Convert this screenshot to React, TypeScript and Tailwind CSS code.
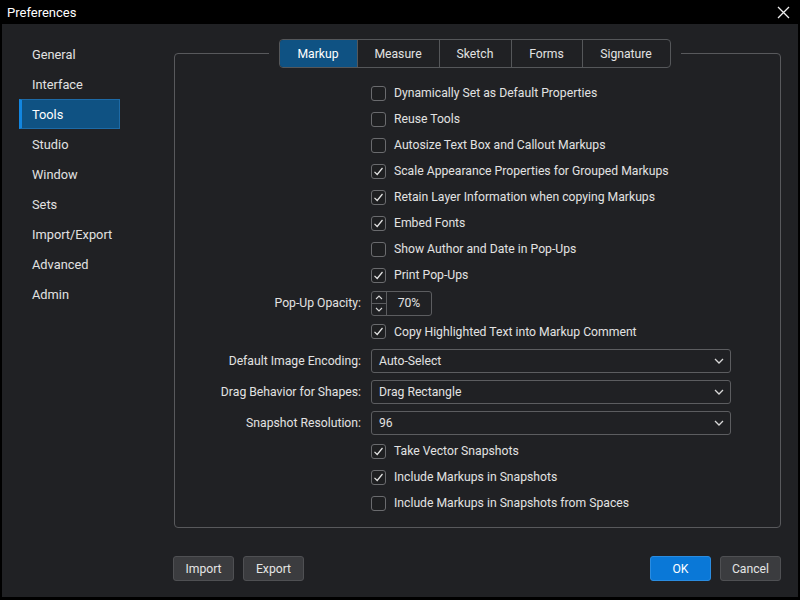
import React from 'react';

const font = { fontFamily: 'Roboto, "Liberation Sans", sans-serif' };

const navItems = ['General', 'Interface', 'Tools', 'Studio', 'Window', 'Sets', 'Import/Export', 'Advanced', 'Admin'];
const tabs = ['Markup', 'Measure', 'Sketch', 'Forms', 'Signature'];

function Check({ checked }: { checked: boolean }) {
  return (
    <div className="w-[15px] h-[15px] rounded-[3px] border border-[#6a6b6e] bg-[#1e1f21] flex items-center justify-center">
      {checked && (
        <svg width="11" height="11" viewBox="0 0 11 11" fill="none">
          <path d="M1.5 5.8 L4.2 8.5 L9.5 2" stroke="#e6e6e6" strokeWidth="1.2" />
        </svg>
      )}
    </div>
  );
}

function CheckRow({ label, checked, cls = 'h-[26px]' }: { label: string; checked: boolean; cls?: string }) {
  return (
    <div className={`flex items-center ${cls}`}>
      <div className="w-[196px]" />
      <Check checked={checked} />
      <span className="ml-[8px] pt-[1px]">{label}</span>
    </div>
  );
}

function Chevron() {
  return (
    <svg width="10" height="6" viewBox="0 0 10 6" fill="none">
      <path d="M1 1 L5 5 L9 1" stroke="#d8d8d8" strokeWidth="1.3" />
    </svg>
  );
}

function SelectRow({ label, value }: { label: string; value: string }) {
  return (
    <div className="flex items-center h-[31px]">
      <div className="w-[186px] text-right pt-[1px]">{label}</div>
      <div className="ml-[10px] w-[360px] h-[24px] rounded-[3px] border border-[#5c5d60] flex items-center justify-between pl-[7px] pr-[6px]">
        <span className="pt-[1px]">{value}</span>
        <Chevron />
      </div>
    </div>
  );
}

function Btn({ label, primary }: { label: string; primary?: boolean }) {
  return (
    <div
      className={`w-[61px] h-[25px] pt-[1px] rounded-[3px] border flex items-center justify-center ${
        primary ? 'bg-[#0a78d7] border-[#2a8ce0] text-white' : 'bg-[#3b3c3f] border-[#4f5053] text-[#e4e4e4]'
      }`}
    >
      {label}
    </div>
  );
}

export default function App() {
  const upper = [
    ['Dynamically Set as Default Properties', false],
    ['Reuse Tools', false],
    ['Autosize Text Box and Callout Markups', false],
    ['Scale Appearance Properties for Grouped Markups', true],
    ['Retain Layer Information when copying Markups', true],
    ['Embed Fonts', true],
    ['Show Author and Date in Pop-Ups', false],
    ['Print Pop-Ups', true],
  ] as const;

  return (
    <div className="w-[800px] h-[600px] bg-black flex flex-col text-[12.2px] text-[#e2e2e2]" style={font}>
      {/* title bar */}
      <div className="h-[24px] flex items-center justify-between pl-[7px] pr-[10px] text-[13px] text-white">
        <span className="pt-[1px]">Preferences</span>
        <svg width="13" height="13" viewBox="0 0 13 13" fill="none">
          <path d="M1 1 L12 12 M12 1 L1 12" stroke="#f0f0f0" strokeWidth="1.3" />
        </svg>
      </div>

      <div className="flex-1 mx-[2px] mb-[3px] bg-[#202124] flex flex-col">
        <div className="flex flex-1">
          {/* sidebar */}
          <div className="w-[172px] pt-[15px] pl-[17px] flex flex-col">
            {navItems.map((n) => (
              <div
                key={n}
                className={`w-[101px] h-[30px] pt-[2px] flex items-center text-[12.8px] ${
                  n === 'Tools'
                    ? 'bg-[#0f5283] border-y border-r border-[#1d6aa6] border-l-[3px] border-l-[#1286e0] pl-[10px] text-white'
                    : 'pl-[13px]'
                }`}
              >
                {n}
              </div>
            ))}
          </div>

          {/* content */}
          <div className="flex-1 pt-[15px] pr-[17px] flex flex-col">
            <div className="flex justify-center relative z-10 -mb-[15px] pr-[6px]">
              <div className="bg-[#202124] px-[10px]">
                <div className="flex h-[29px] rounded-[4px] border border-[#55575a] overflow-hidden">
                  {tabs.map((t, i) => (
                    <div
                      key={t}
                      className={`flex items-center justify-center pt-[2px] ${i > 0 ? 'border-l border-[#55575a]' : ''} ${
                        t === 'Markup' ? 'bg-[#0f5283] text-white' : ''
                      } ${['w-[77px]', 'w-[82px]', 'w-[72px]', 'w-[71px]', 'w-[88px]'][i]}`}
                    >
                      {t}
                    </div>
                  ))}
                </div>
              </div>
            </div>
            <div className="h-[475px] rounded-[4px] border border-[#58595c] pt-[26px]">
              {upper.map(([l, c]) => (
                <CheckRow key={l} label={l} checked={c} />
              ))}
              <div className="flex items-center h-[30px]">
                <div className="w-[186px] text-right pt-[1px]">Pop-Up Opacity:</div>
                <div className="ml-[10px] w-[61px] h-[25px] rounded-[3px] border border-[#5c5d60] flex">
                  <div className="w-[15px] border-r border-[#5c5d60] flex flex-col">
                    <div className="flex-1 flex items-center justify-center border-b border-[#5c5d60]">
                      <svg width="8" height="5" viewBox="0 0 8 5" fill="none">
                        <path d="M1 4 L4 1 L7 4" stroke="#d8d8d8" strokeWidth="1.1" />
                      </svg>
                    </div>
                    <div className="flex-1 flex items-center justify-center">
                      <svg width="8" height="5" viewBox="0 0 8 5" fill="none">
                        <path d="M1 1 L4 4 L7 1" stroke="#d8d8d8" strokeWidth="1.1" />
                      </svg>
                    </div>
                  </div>
                  <div className="flex-1 flex items-center justify-center pt-[1px]">70%</div>
                </div>
              </div>
              <CheckRow label="Copy Highlighted Text into Markup Comment" checked={true} cls="h-[27px]" />
              <SelectRow label="Default Image Encoding:" value="Auto-Select" />
              <SelectRow label="Drag Behavior for Shapes:" value="Drag Rectangle" />
              <SelectRow label="Snapshot Resolution:" value="96" />
              <CheckRow label="Take Vector Snapshots" checked={true} />
              <CheckRow label="Include Markups in Snapshots" checked={true} />
              <CheckRow label="Include Markups in Snapshots from Spaces" checked={false} />
            </div>
          </div>
        </div>

        {/* footer */}
        <div className="h-[69px] flex items-start pt-[28px] pl-[171px] pr-[17px] gap-[9px]">
          <Btn label="Import" />
          <Btn label="Export" />
          <div className="flex-1" />
          <Btn label="OK" primary />
          <Btn label="Cancel" />
        </div>
      </div>
    </div>
  );
}
